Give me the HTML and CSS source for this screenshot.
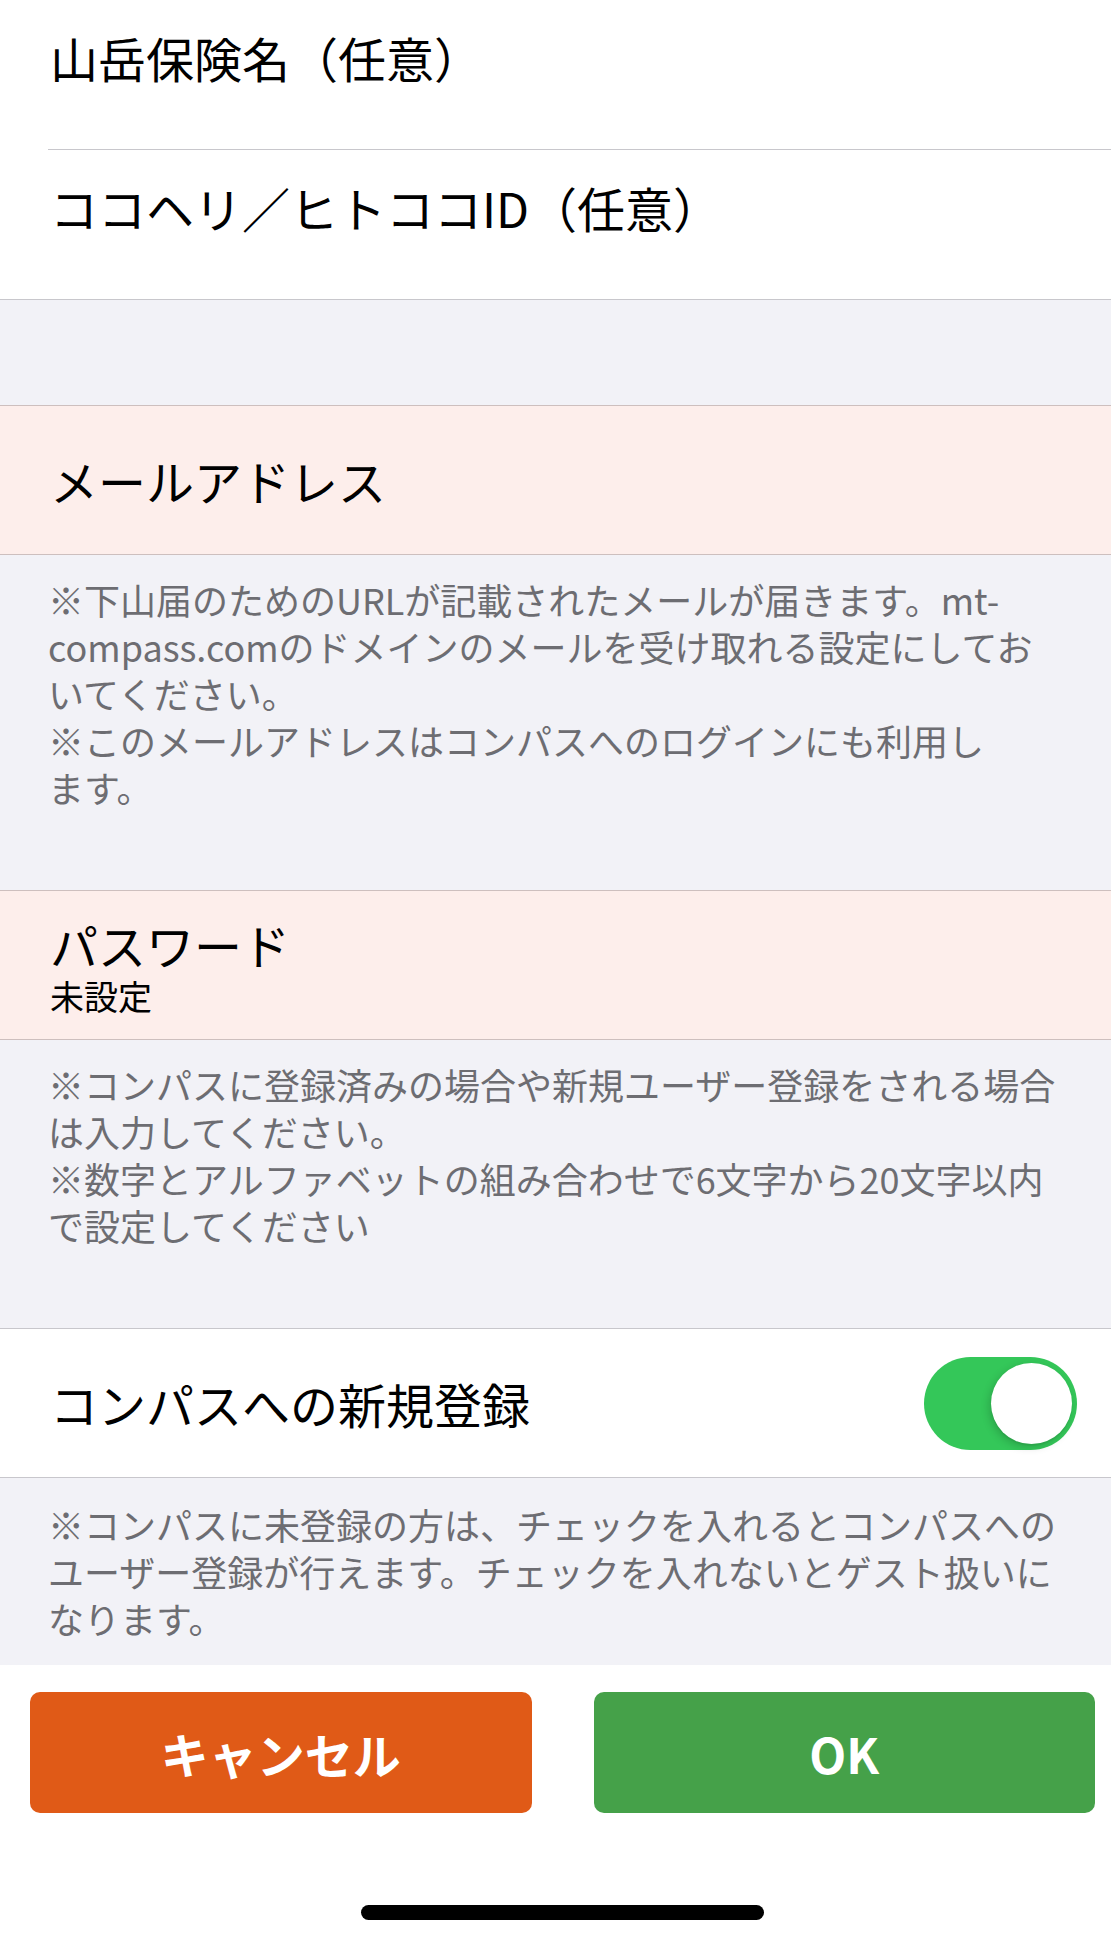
FILE: index.html
```html
<!DOCTYPE html>
<html lang="ja">
<head>
  <meta charset="UTF-8" />
  <meta name="viewport" content="width=device-width, initial-scale=1.0" />
  <title>登山届</title>
  <link rel="stylesheet" href="styles.css">
</head>
<body>
  <div class="group">
    <div class="field inset">
      <div class="label">山岳保険名（任意）</div>
      <div class="value"></div>
    </div>
    <div class="field">
      <div class="label">ココヘリ／ヒトココID（任意）</div>
      <div class="value"></div>
    </div>
  </div>

  <div class="spacer"></div>

  <div class="row pink">
    <div class="label">メールアドレス</div>
  </div>
  <p class="note">※下山届のためのURLが記載されたメールが届きます。mt-<br>compass.comのドメインのメールを受け取れる設定にしてお<br>いてください。<br>※このメールアドレスはコンパスへのログインにも利用し<br>ます。</p>

  <div class="row pink">
    <div class="stack">
      <div class="label tight">パスワード</div>
      <div class="sub">未設定</div>
    </div>
  </div>
  <p class="note">※コンパスに登録済みの場合や新規ユーザー登録をされる場合<br>は入力してください。<br>※数字とアルファベットの組み合わせで6文字から20文字以内<br>で設定してください</p>

  <div class="row white">
    <div class="label">コンパスへの新規登録</div>
    <div class="toggle on"><span class="knob"></span></div>
  </div>
  <p class="note last">※コンパスに未登録の方は、チェックを入れるとコンパスへの<br>ユーザー登録が行えます。チェックを入れないとゲスト扱いに<br>なります。</p>

  <div class="actions">
    <button class="btn cancel">キャンセル</button>
    <button class="btn ok">OK</button>
  </div>
  <div class="home-bar"></div>
</body>
</html>
```

FILE: styles.css
```css
body {
  margin: 0;
  background: #fff;
  font-family: "Noto Sans CJK JP", "Noto Sans", sans-serif;
  color: #000;
}
.group {
  background: #fff;
  border-bottom: 1px solid #c8c7cc;
  padding-left: 48px;
}
.field {
  height: 149px;
  padding: 28px 0 0 2px;
  box-sizing: border-box;
}
.field.inset {
  height: 150px;
  border-bottom: 1px solid #c8c7cc;
}
.label {
  font-size: 48px;
  line-height: 58px;
  white-space: nowrap;
}
.label.tight {
  line-height: 48px;
}
.value {
  height: 58px;
}
.spacer {
  height: 105px;
  background: #f2f2f7;
}
.row {
  height: 150px;
  box-sizing: border-box;
  display: flex;
  align-items: center;
  justify-content: space-between;
  padding: 0 34px 0 50px;
}
.row.pink {
  background: #fdeeeb;
  border-top: 1px solid #cdbfbe;
  border-bottom: 1px solid #cdbfbe;
}
.row.white {
  background: #fff;
  border-top: 1px solid #c8c7cc;
  border-bottom: 1px solid #c8c7cc;
}
.stack {
  display: flex;
  flex-direction: column;
  gap: 10px;
  margin-top: 4px;
}
.sub {
  font-size: 34px;
  line-height: 36px;
}
.note {
  margin: 0;
  background: #f2f2f7;
  color: #6d6d72;
  font-size: 36px;
  line-height: 47px;
  padding: 21px 10px 79px 48px;
  white-space: nowrap;
}
.note.last {
  padding-top: 23px;
  padding-bottom: 23px;
}
.toggle {
  width: 153px;
  height: 93px;
  border-radius: 47px;
  background: #34c759;
  box-sizing: border-box;
  padding: 6px 5px;
  display: flex;
  justify-content: flex-end;
}
.knob {
  width: 81px;
  height: 81px;
  border-radius: 50%;
  background: #fff;
  box-shadow: -2px 3px 8px rgba(0, 0, 0, 0.18), 0 2px 1px rgba(0, 0, 0, 0.05);
}
.actions {
  display: flex;
  gap: 62px;
  padding: 27px 16px 0 30px;
}
.btn {
  flex: 1;
  height: 121px;
  border: none;
  border-radius: 10px;
  color: #fff;
  font-family: "Noto Sans CJK JP", "Noto Sans", sans-serif;
  font-size: 48px;
  font-weight: bold;
}
.cancel {
  background: #e05a17;
}
.ok {
  background: #45a149;
}
.home-bar {
  width: 403px;
  height: 15px;
  border-radius: 8px;
  background: #000;
  margin: 92px 0 0 361px;
}
```
